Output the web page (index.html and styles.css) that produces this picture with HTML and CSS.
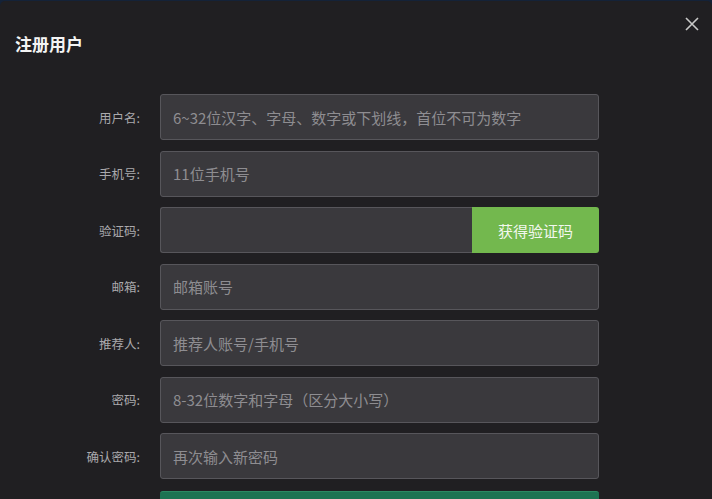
FILE: index.html
```html
<!DOCTYPE html>
<html lang="zh-CN">
<head>
<meta charset="utf-8">
<title>注册用户</title>
<link rel="stylesheet" href="styles.css">
</head>
<body>
<div class="dialog">
  <div class="header">
    <h1 class="title">注册用户</h1>
    <button class="close" aria-label="关闭">
      <svg width="14" height="14" viewBox="0 0 14 14"><path d="M1 1L13 13M13 1L1 13" stroke="#c8c8c8" stroke-width="1.6" fill="none"/></svg>
    </button>
  </div>
  <form class="form">
    <label class="label">用户名:</label>
    <input class="field" type="text" placeholder="6~32位汉字、字母、数字或下划线，首位不可为数字">

    <label class="label">手机号:</label>
    <input class="field" type="text" placeholder="11位手机号">

    <label class="label">验证码:</label>
    <div class="code-box">
      <input class="field code-field" type="text">
      <button type="button" class="code-btn">获得验证码</button>
    </div>

    <label class="label">邮箱:</label>
    <input class="field" type="text" placeholder="邮箱账号">

    <label class="label">推荐人:</label>
    <input class="field" type="text" placeholder="推荐人账号/手机号">

    <label class="label">密码:</label>
    <input class="field" type="password" placeholder="8-32位数字和字母（区分大小写）">

    <label class="label">确认密码:</label>
    <input class="field" type="password" placeholder="再次输入新密码">

    <span class="label"></span>
    <button type="button" class="submit" aria-label="注册"></button>
  </form>
</div>
</body>
</html>
```
FILE: styles.css
```css
html, body {
  margin: 0;
  padding: 0;
  background: #142238;
  height: 100%;
  overflow: hidden;
}
body {
  font-family: "Noto Sans CJK SC", "Noto Sans", sans-serif;
}
.dialog {
  position: relative;
  margin-top: 1px;
  min-height: 498px;
  background: #201f22;
  border-radius: 5px 5px 0 0;
}
.header {
  height: 86px;
  display: flex;
  align-items: center;
  padding-left: 15px;
}
.title {
  margin: 0;
  font-size: 17px;
  font-weight: bold;
  color: #f4f4f4;
  line-height: 20px;
}
.close {
  position: absolute;
  top: 16px;
  right: 13px;
  width: 14px;
  height: 14px;
  padding: 0;
  border: none;
  background: none;
  display: flex;
}
.form {
  display: grid;
  grid-template-columns: 140px 439px;
  grid-auto-rows: 46px;
  column-gap: 20px;
  row-gap: 10.5px;
  padding-top: 7px;
}
.label {
  align-self: center;
  text-align: right;
  font-size: 12.5px;
  color: #aaa9ac;
}
.field {
  box-sizing: border-box;
  height: 46px;
  width: 100%;
  margin: 0;
  padding: 0 12px;
  background: #3a393d;
  border: 1px solid #57565b;
  border-radius: 3px;
  color: #d0d0d0;
  font-family: "Noto Sans CJK SC", "Noto Sans", sans-serif;
  font-size: 15px;
  outline: none;
}
.field::placeholder {
  color: #8e8d91;
}
.code-box {
  display: flex;
  height: 46px;
}
.code-field {
  flex: 1;
  border-right: none;
  border-radius: 3px 0 0 3px;
}
.code-btn {
  width: 127px;
  height: 46px;
  border: none;
  border-radius: 0 3px 3px 0;
  background: #73b84e;
  color: #f2f7ee;
  font-family: "Noto Sans CJK SC", "Noto Sans", sans-serif;
  font-size: 15px;
  padding: 0;
}
.submit {
  margin-top: 1px;
  height: 46px;
  border: none;
  border-top: 1px solid #2a8a62;
  border-radius: 3px;
  background: #1d7352;
  color: #ffffff;
  font-family: "Noto Sans CJK SC", "Noto Sans", sans-serif;
  font-size: 15px;
}
```
